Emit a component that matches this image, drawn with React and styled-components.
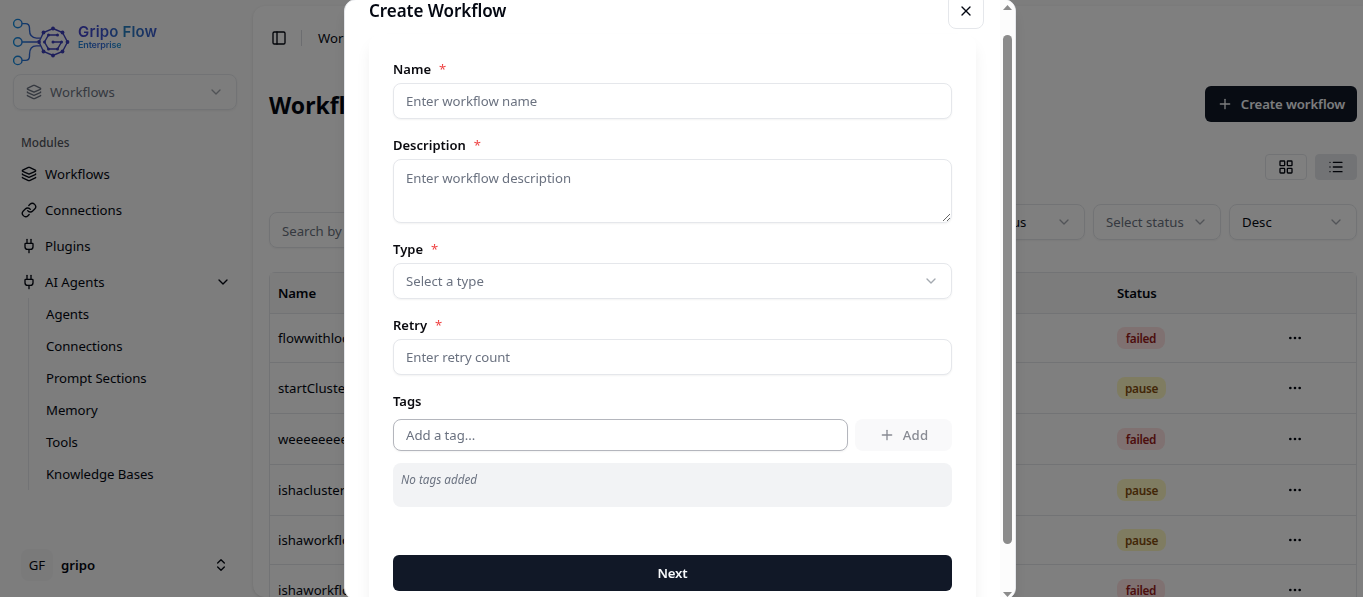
import React from 'react';
import styled, { createGlobalStyle } from 'styled-components';
import {
  Layers, Link, Plug, ChevronDown, ChevronsUpDown, PanelLeft, Plus, LayoutGrid, List, Ellipsis, X,
} from 'lucide-react';

const Global = createGlobalStyle`
  *, *::before, *::after { box-sizing: border-box; }
  html, body { margin: 0; height: 100%; overflow: hidden; }
  body {
    font-family: 'Noto Sans', 'Open Sans', sans-serif;
    font-size: 13.2px;
    line-height: 20px;
    color: #030711;
    background: #fafafa;
  }
  button, input, textarea { font: inherit; color: inherit; }
  svg { flex: none; display: block; }
`;

const Shell = styled.div`
  display: flex;
  width: 1363px;
  height: 597px;
  overflow: hidden;
  background: #fafafa;
`;

const Sidebar = styled.aside`
  width: 253px;
  flex: none;
  display: flex;
  flex-direction: column;
  padding: 16px 16px 16px 13px;
`;

const LogoRow = styled.div`
  display: flex;
  height: 58px;
`;

const Brand = styled.div`
  display: flex;
  flex-direction: column;
  margin: 8px 0 0 8px;
  font-family: Inter, 'Open Sans', sans-serif;
`;

const BrandName = styled.span`
  font-size: 15px;
  line-height: 16px;
  font-weight: 600;
  white-space: nowrap;
  letter-spacing: 0.15px;
  background: linear-gradient(90deg, #4340c8, #3a56d0 35%, #2580c0 60%, #3d58cc);
  background-clip: text;
  color: transparent;
`;

const BrandTag = styled(BrandName)`
  font-size: 9px;
  line-height: 10px;
  letter-spacing: -0.15px;
  align-self: flex-start;
  background: linear-gradient(90deg, #2088d8, #3a66d8 50%, #1c98d8);
  background-clip: text;
`;

const SelectBox = styled.div`
  display: flex;
  align-items: center;
  gap: 8px;
  width: ${(p) => p.$width || 'auto'};
  height: 36px;
  padding: 0 12px;
  border: 1px solid #e5e7eb;
  border-radius: 8px;
  box-shadow: 0 1px 2px rgba(0, 0, 0, 0.05);
  color: ${(p) => (p.$muted ? '#6b7280' : 'inherit')};
  white-space: nowrap;
  flex: none;
  & > svg:last-child { margin-left: auto; opacity: 0.5; color: #4b5563; }
`;

const GroupLabel = styled.div`
  margin: 22px 0 4px 8px;
  height: 20px;
  font-size: 11.8px;
  font-weight: 500;
  color: #52555c;
`;

const NavItem = styled.div`
  display: flex;
  align-items: center;
  gap: 8px;
  height: 36px;
  padding: 0 6px 0 8px;
  & > svg:nth-of-type(2) { margin-left: auto; }
`;

const SubList = styled.div`
  display: flex;
  flex-direction: column;
  margin: -2px 0 0 15px;
  padding-left: 17px;
  border-left: 1px solid #e5e7eb;
  height: 192px;
`;

const SubItem = styled.div`
  height: 32px;
  line-height: 32px;
  letter-spacing: -0.05px;
`;

const User = styled.div`
  display: flex;
  align-items: center;
  gap: 8px;
  margin-top: auto;
  padding: 0 8px;
  & > svg { margin-left: auto; }
`;

const Avatar = styled.div`
  width: 32px;
  height: 32px;
  line-height: 32px;
  border-radius: 8px;
  background: #f4f4f5;
  text-align: center;
`;

const UserName = styled.span`
  font-weight: 600;
`;

const Main = styled.main`
  flex: 1;
  margin-top: 6px;
  padding: 0 6px 0 16px;
  background: #fff;
  border-radius: 12px 0 0 12px;
  box-shadow: 0 1px 3px rgba(0, 0, 0, 0.12);
  min-width: 0;
`;

const TopBar = styled.header`
  display: flex;
  align-items: center;
  height: 64px;
  padding-left: 2px;
`;

const Divider = styled.span`
  width: 1px;
  height: 16px;
  margin: 0 16px 0 14px;
  background: #d9dbe0;
`;

const TitleRow = styled.div`
  display: flex;
  align-items: center;
  justify-content: space-between;
  height: 36px;
  margin-top: 16px;
`;

const PageTitle = styled.h1`
  margin: 2px 0 0;
  font-size: 23px;
  font-weight: 700;
`;

const PrimaryButton = styled.button`
  display: flex;
  align-items: center;
  justify-content: center;
  gap: 8px;
  width: ${(p) => p.$width || '100%'};
  height: 36px;
  border: 0;
  padding: 0;
  border-radius: 6px;
  background: #111827;
  color: #f8fafc;
  font-weight: 600;
  letter-spacing: -0.1px;
  flex: none;
`;

const ViewToggle = styled.div`
  display: flex;
  justify-content: flex-end;
  gap: 8px;
  margin-top: 32px;
`;

const ToggleButton = styled.button`
  display: grid;
  place-items: center;
  width: 42px;
  height: 26px;
  padding: 0;
  border: 1px solid #e5e7eb;
  border-radius: 4px;
  background: ${(p) => (p.$on ? '#e5e7eb' : 'transparent')};
`;

const Filters = styled.div`
  display: flex;
  gap: 8px;
  margin-top: 24px;
  height: 44px;
`;

const SearchBox = styled(SelectBox)`
  margin: 8px auto 0 0;
  padding-top: 2px;
`;

const Table = styled.div`
  margin-top: 24px;
  height: 420px;
  border: 1px solid #e5e7eb;
  border-radius: 6px 6px 0 0;
`;

const Row = styled.div`
  display: grid;
  grid-template-columns: 839px 140px 1fr;
  align-items: center;
  height: ${(p) => p.$h}px;
  padding-left: 8px;
  border-bottom: 1px solid #e5e7eb;
  & > svg { margin-left: 30px; }
`;

const HeadRow = styled(Row)`
  background: #f9f9f9;
  font-weight: 600;
  letter-spacing: -0.15px;
`;

const Badge = styled.span`
  justify-self: start;
  width: ${(p) => (p.$kind === 'failed' ? 48 : 49)}px;
  height: 22px;
  line-height: 23px;
  text-align: center;
  border-radius: 8px;
  font-size: 11.8px;
  font-weight: 600;
  letter-spacing: -0.3px;
  background: ${(p) => (p.$kind === 'failed' ? '#fee2e2' : '#fef9c3')};
  color: ${(p) => (p.$kind === 'failed' ? '#991b1b' : '#854d0e')};
`;

const Overlay = styled.div`
  position: fixed;
  inset: 0;
  background: rgba(0, 0, 0, 0.5);
`;

const Dialog = styled.div`
  position: fixed;
  left: 344px;
  top: -1px;
  width: 672px;
  height: 601px;
  display: flex;
  border: 1px solid #e5e7eb;
  border-radius: 12px;
  background: #fff;
  overflow: hidden;
  box-shadow: 0 10px 15px -3px rgba(0, 0, 0, 0.14), 0 4px 6px -4px rgba(0, 0, 0, 0.1);
`;

const DialogBody = styled.div`
  flex: 1;
  padding: 0 24px;
`;

const DialogHead = styled.div`
  display: flex;
  justify-content: space-between;
  height: 34px;
`;

const DialogTitle = styled.h2`
  margin: 0;
  font-size: 17px;
  line-height: 21px;
  font-weight: 600;
  letter-spacing: -0.05px;
`;

const CloseButton = styled.button`
  display: grid;
  place-items: center;
  width: 36px;
  height: 36px;
  margin: -7px -8px 0 0;
  padding: 0;
  border: 1px solid #e5e7eb;
  border-radius: 8px;
  background: #fff;
`;

const Card = styled.form`
  display: flex;
  flex-direction: column;
  gap: 16px;
  width: 607px;
  height: 640px;
  padding: 25px 24px;
  border-radius: 12px;
  background: #fff;
  box-shadow: 0 10px 16px -2px rgba(0, 0, 0, 0.08);
`;

const Field = styled.div`
  display: flex;
  flex-direction: column;
  gap: ${(p) => p.$gap || 4}px;
`;

const Label = styled.label`
  height: 20px;
  font-weight: 600;
  font-size: 13px;
  color: #0a0a0f;
`;

const Star = styled.span`
  margin-left: 8px;
  color: #ef4444;
  font-weight: 400;
`;

const Input = styled.input`
  width: 100%;
  min-width: 0;
  height: ${(p) => p.$h || 36}px;
  padding: 0 12px;
  border: 1px solid ${(p) => (p.$strong ? '#b4b6bd' : '#e5e7eb')};
  border-radius: 8px;
  background: #fff;
  box-shadow: 0 1px 2px rgba(0, 0, 0, 0.05);
  outline: none;
  letter-spacing: -0.05px;
  &::placeholder { color: #6b7280; opacity: 1; }
`;

const TextArea = styled.textarea`
  display: block;
  width: 100%;
  height: 64px;
  padding: 8px 12px;
  border: 1px solid #e5e7eb;
  border-radius: 8px;
  box-shadow: 0 1px 2px rgba(0, 0, 0, 0.05);
  outline: none;
  letter-spacing: -0.05px;
  &::placeholder { color: #6b7280; opacity: 1; }
`;

const TagRow = styled.div`
  display: flex;
  gap: 8px;
`;

const AddButton = styled.button`
  display: flex;
  align-items: center;
  justify-content: center;
  gap: 8px;
  flex: none;
  width: 97px;
  height: 32px;
  margin-left: -1px;
  padding: 0;
  border: 0;
  border-radius: 8px;
  background: #f9f9fa;
  color: #888b93;
  font-weight: 500;
  letter-spacing: 0.2px;
`;

const TagList = styled.div`
  height: 44px;
  margin-top: 4px;
  padding: 6px 8px;
  border-radius: 8px;
  background: #f2f3f5;
  color: #6b7280;
  font-size: 11.7px;
  font-style: italic;
`;

const Submit = styled.div`
  margin-top: 32px;
`;

const ScrollTrack = styled.div`
  display: flex;
  flex-direction: column;
  align-items: center;
  width: 15px;
  padding-top: 5px;
  background: #fcfcfc;
`;

const ScrollThumb = styled.div`
  width: 9px;
  height: 509px;
  margin: 25px 0 48px;
  border-radius: 5px;
  background: #8b8b8b;
`;

const Arrow = ({ down }) => (
  <svg width="9" height="5" viewBox="0 0 9 5">
    <path d={down ? 'M0 0h9L4.5 5z' : 'M0 5h9L4.5 0z'} fill="#8b8b8b" />
  </svg>
);

const LogoMark = () => (
  <svg width="57" height="52" viewBox="13 16 57 52" fill="none" strokeWidth="1.4">
    <defs>
      <linearGradient id="mark" x1="13" y1="0" x2="50" y2="0" gradientUnits="userSpaceOnUse">
        <stop offset="0" stopColor="#1090e0" />
        <stop offset="0.6" stopColor="#3658cc" />
        <stop offset="1" stopColor="#3c3fb8" />
      </linearGradient>
    </defs>
    <g stroke="url(#mark)">
      <circle cx="17.8" cy="23.6" r="4.2" />
      <circle cx="17.8" cy="42" r="4.2" />
      <circle cx="17.8" cy="60.4" r="4.2" />
      <path d="M22 23.6h3.5q4 0 4 4.500v1.500q0 8.500 7 8.500h4" />
      <path d="M22 42h15v.1" />
      <path d="M22 60.4h3.5q4 0 4-4.500v-1.500q0-8.500 7-8.500h4" />
      <path d="M53 28.5l9.5 4 5 9.500-5 9.500-9.500 4-9.500-4-4.500-9.500 4.500-9.500z" />
      <path d="M57.5 35h-9l-4 7 4 7h9l4-7H53" />
    </g>
    <g fill="#3c3fb8">
      {[[53, 28.5], [62.5, 32.5], [67.5, 42], [62.5, 51.5], [53, 55.5], [43.5, 51.5], [39, 42], [43.5, 32.5],
        [57.5, 35], [48.5, 35], [44.5, 42], [48.5, 49], [57.5, 49], [53, 42], [61.5, 42]].map(([x, y], i) => (
        <circle key={i} cx={x} cy={y} r={i < 8 ? 1.9 : 1.5} />
      ))}
    </g>
  </svg>
);

const rows = [
  ['flowwithlocal', 'failed', 49],
  ['startClusterflow', 'pause', 51],
  ['weeeeeeeeee', 'failed', 51],
  ['ishacluster', 'pause', 51],
  ['ishaworkflow', 'pause', 49],
  ['ishaworkflow2', 'failed', 51],
];

const Required = ({ children }) => (
  <Label>{children}<Star>*</Star></Label>
);

export default function App() {
  return (
    <>
      <Global />
      <Shell>
        <Sidebar>
          <LogoRow>
            <LogoMark />
            <Brand>
              <BrandName>Gripo Flow</BrandName>
              <BrandTag>Enterprise</BrandTag>
            </Brand>
          </LogoRow>
          <SelectBox $muted><Layers size={16} />Workflows<ChevronDown size={16} /></SelectBox>
          <GroupLabel>Modules</GroupLabel>
          <NavItem><Layers size={16} />Workflows</NavItem>
          <NavItem><Link size={16} />Connections</NavItem>
          <NavItem><Plug size={16} />Plugins</NavItem>
          <NavItem><Plug size={16} />AI Agents<ChevronDown size={16} /></NavItem>
          <SubList>
            {['Agents', 'Connections', 'Prompt Sections', 'Memory', 'Tools', 'Knowledge Bases'].map((t) => (
              <SubItem key={t}>{t}</SubItem>
            ))}
          </SubList>
          <User><Avatar>GF</Avatar><UserName>gripo</UserName><ChevronsUpDown size={16} /></User>
        </Sidebar>
        <Main>
          <TopBar><PanelLeft size={16} /><Divider />Workflows</TopBar>
          <TitleRow>
            <PageTitle>Workflows</PageTitle>
            <PrimaryButton $width="152px"><Plus size={16} />Create workflow</PrimaryButton>
          </TitleRow>
          <ViewToggle>
            <ToggleButton><LayoutGrid size={16} /></ToggleButton>
            <ToggleButton $on><List size={16} /></ToggleButton>
          </ViewToggle>
          <Filters>
            <SearchBox $muted $width="384px">Search by name</SearchBox>
            <SelectBox $width="128px">All status<ChevronDown size={16} /></SelectBox>
            <SelectBox $width="128px" $muted>Select status<ChevronDown size={16} /></SelectBox>
            <SelectBox $width="128px">Desc<ChevronDown size={16} /></SelectBox>
          </Filters>
          <Table>
            <HeadRow $h={41}><span>Name</span><span>Status</span></HeadRow>
            {rows.map(([name, status, h]) => (
              <Row key={name} $h={h}>
                <span>{name}</span><Badge $kind={status}>{status}</Badge><Ellipsis size={16} />
              </Row>
            ))}
          </Table>
        </Main>
      </Shell>
      <Overlay />
      <Dialog>
        <DialogBody>
          <DialogHead>
            <DialogTitle>Create Workflow</DialogTitle>
            <CloseButton><X size={16} /></CloseButton>
          </DialogHead>
          <Card>
            <Field><Required>Name</Required><Input placeholder="Enter workflow name" /></Field>
            <Field><Required>Description</Required><TextArea placeholder="Enter workflow description" /></Field>
            <Field>
              <Required>Type</Required>
              <SelectBox $muted>Select a type<ChevronDown size={16} /></SelectBox>
            </Field>
            <Field><Required>Retry</Required><Input placeholder="Enter retry count" /></Field>
            <Field $gap={8}>
              <Label>Tags</Label>
              <TagRow>
                <Input $h={32} $strong placeholder="Add a tag..." />
                <AddButton><Plus size={16} />Add</AddButton>
              </TagRow>
              <TagList>No tags added</TagList>
            </Field>
            <Submit><PrimaryButton type="button">Next</PrimaryButton></Submit>
          </Card>
        </DialogBody>
        <ScrollTrack><Arrow /><ScrollThumb /><Arrow down /></ScrollTrack>
      </Dialog>
    </>
  );
}
